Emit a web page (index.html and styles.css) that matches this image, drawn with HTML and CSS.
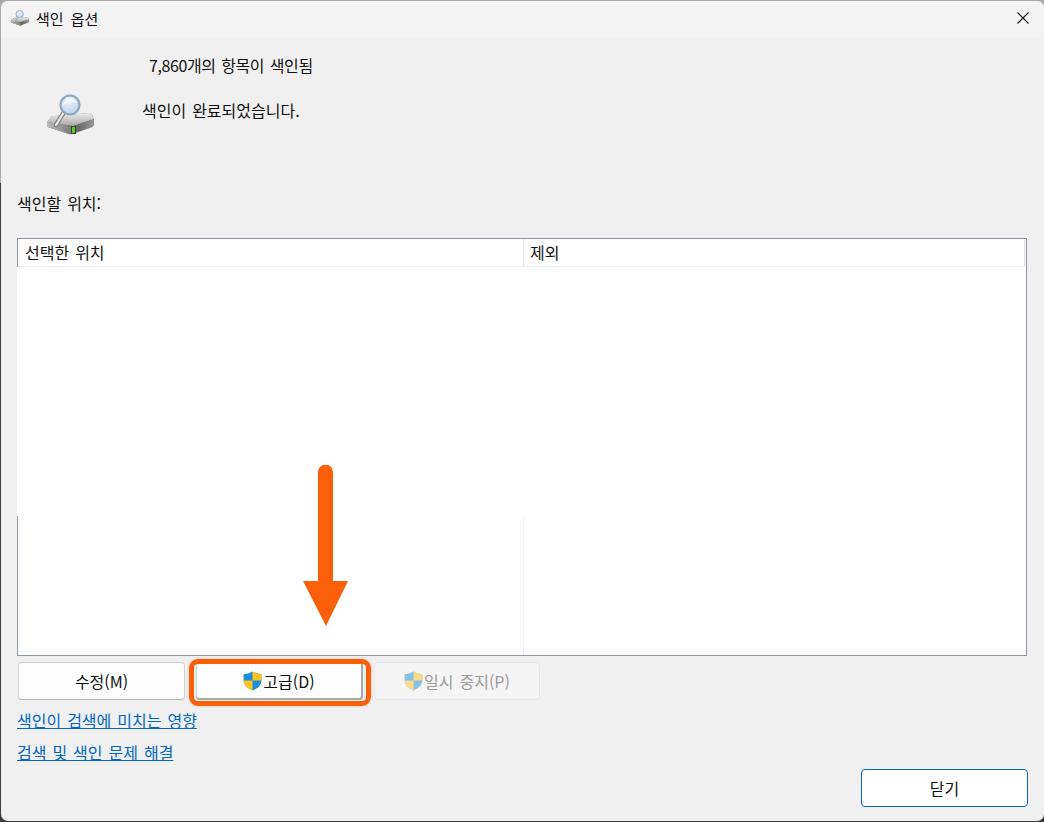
FILE: index.html
```html
<!DOCTYPE html>
<html lang="ko">
<head>
    <meta charset="UTF-8">
    <meta name="viewport" content="width=device-width, initial-scale=1.0">
    <title>색인 옵션</title>
    <link rel="stylesheet" href="styles.css">
</head>
<body>

    <div class="window">
        <div class="title-bar">
            <svg class="title-icon" width="20" height="20" viewBox="0 0 52 42">
                <use href="#drive-icon"/>
            </svg>
            <span class="title-text">색인 옵션</span>
            <svg class="close-icon" width="12" height="12" viewBox="0 0 12 12">
                <path d="M0.5 0.5L11.5 11.5M11.5 0.5L0.5 11.5" stroke="#1a1a1a" stroke-width="1.1" fill="none"/>
            </svg>
        </div>

        <div class="content">
            <div class="status">
                <svg class="status-icon" width="52" height="42" viewBox="0 0 52 42">
                    <defs>
                        <linearGradient id="drive-top" x1="0" y1="0" x2="0" y2="1">
                            <stop offset="0" stop-color="#ececec"/>
                            <stop offset="1" stop-color="#a8a8a8"/>
                        </linearGradient>
                        <linearGradient id="drive-left" x1="0" y1="0" x2="1" y2="0">
                            <stop offset="0" stop-color="#bdbdbd"/>
                            <stop offset="1" stop-color="#767676"/>
                        </linearGradient>
                        <linearGradient id="drive-right" x1="0" y1="0" x2="1" y2="0">
                            <stop offset="0" stop-color="#5c5c5c"/>
                            <stop offset="1" stop-color="#969696"/>
                        </linearGradient>
                        <radialGradient id="lens" cx="0.4" cy="0.3" r="0.8">
                            <stop offset="0" stop-color="#eaf3fc"/>
                            <stop offset="1" stop-color="#b5cfea"/>
                        </radialGradient>
                        <g id="drive-icon">
                            <path d="M2 28L6 23Q7 22 9 22L44 19Q46 19 47 21L49 25V30Q49 32 47 33L30 39Q27 40.500 24 40L4 33.500Q2 33 2 31Z" fill="#7a7a7a"/>
                            <path d="M2 28L6 23Q7 22 9 22L44 19Q46 19 47 21L49 25L28 32Z" fill="url(#drive-top)"/>
                            <path d="M2 28L28 32V40Q26 40.500 24 40L4 33.500Q2 33 2 31Z" fill="url(#drive-left)"/>
                            <path d="M28 32L49 25V30Q49 32 47 33L30 39Q29 39.500 28 40Z" fill="url(#drive-right)"/>
                            <rect x="26" y="32" width="5" height="8" fill="#3d3d3d"/>
                            <rect x="27" y="33" width="3" height="6" fill="#58d02a"/>
                            <path d="M11 31L19 18" stroke="#7e7e7e" stroke-width="4.500" stroke-linecap="round"/>
                            <path d="M11 31L19 18" stroke="#ececec" stroke-width="2.200" stroke-linecap="round"/>
                            <circle cx="25" cy="11" r="9.500" fill="url(#lens)" stroke="#8fa7c0" stroke-width="2.200"/>
                            <path d="M18 11Q19 5 26 4Q31 5 32 9Q24 7 18 11Z" fill="#f4f9fe"/>
                        </g>
                    </defs>
                    <use href="#drive-icon"/>
                </svg>
                <div class="status-text">
                    <p class="item-count">7,860개의 항목이 색인됨</p>
                    <p class="item-state">색인이 완료되었습니다.</p>
                </div>
            </div>

            <p class="list-label">색인할 위치:</p>

            <div class="locations">
                <div class="locations-head">
                    <div class="col-name">선택한 위치</div>
                    <div class="col-exclude">제외</div>
                </div>
                <div class="locations-blank"></div>
                <div class="locations-rest">
                    <div class="col-name"></div>
                    <div class="col-exclude"></div>
                </div>
            </div>

            <div class="button-row">
                <button class="btn">수정(M)</button>
                <button class="btn btn-focus">
                    <svg class="shield" width="19" height="20" viewBox="0 0 18 19">
                        <use href="#shield-icon"/>
                    </svg>고급(D)
                </button>
                <button class="btn btn-disabled">
                    <svg class="shield" width="19" height="20" viewBox="0 0 18 19">
                        <defs>
                            <g id="shield-icon">
                                <path d="M9 0.500Q13 3 17.500 3V9Q17.500 15 9 18.500Q0.500 15 0.500 9V3Q5 3 9 0.500Z" fill="#1a8fdc"/>
                                <path d="M9 0.500Q13 3 17.500 3V9H9Z" fill="#fcc419"/>
                                <path d="M0.500 9Q0.500 15 9 18.500V9Z" fill="#fcc419"/>
                            </g>
                        </defs>
                        <use href="#shield-icon" opacity="0.5"/>
                    </svg>일시 중지(P)
                </button>
            </div>

            <div class="links">
                <a class="link" href="#">색인이 검색에 미치는 영향</a>
                <a class="link" href="#">검색 및 색인 문제 해결</a>
            </div>

            <div class="footer">
                <button class="btn btn-default">닫기</button>
            </div>
        </div>

        <!-- 주석 표시 -->
        <div class="callout-box"></div>
        <svg class="callout-arrow" width="46" height="162" viewBox="0 0 46 162">
            <path d="M22.500 7V120" stroke="#fb5f0a" stroke-width="15" stroke-linecap="round" fill="none"/>
            <path d="M0 116H45L23 161Z" fill="#fb5f0a"/>
        </svg>
    </div>

</body>
</html>
```

FILE: styles.css
```css
* {
    box-sizing: border-box;
}

html, body {
    height: 100%;
}

body {
    margin: 0;
    background: linear-gradient(#a9a9a9 183px, #3c3c3c 183px);
    font-family: "Noto Sans CJK KR", "Liberation Sans", sans-serif;
    font-size: 16px;
    word-spacing: 1.5px;
    color: #111;
    overflow: hidden;
}

.window {
    position: relative;
    width: 1045px;
    height: 822px;
    background-color: #f0f0f0;
    background-clip: padding-box;
    border: 1px solid transparent;
    border-radius: 8px;
    overflow: hidden;
}

.title-bar {
    display: flex;
    align-items: center;
    height: 37px;
    padding: 0 15px 3px 9px;
    background-color: #f3f3f3;
    font-size: 15px;
    word-spacing: 3px;
}

.title-icon {
    margin-right: 6px;
}

.title-text {
    flex: 1;
}

.content {
    padding: 0 17px 0 16px;
}

.status {
    display: flex;
    height: 145px;
}

.status-icon {
    margin: 56px 0 0 28px;
}

.status-text p {
    margin: 0;
    line-height: 22px;
}

.item-count {
    padding: 16px 0 0 52px;
    letter-spacing: -0.4px;
}

.item-state {
    padding: 23px 0 0 45px;
}

.list-label {
    margin: 9px 0 0;
    line-height: 22px;
}

.locations {
    display: flex;
    flex-direction: column;
    height: 418px;
    margin-top: 24px;
    background-color: #fff;
    border: 1px solid #8d97a5;
}

.locations-head {
    display: flex;
    height: 28px;
    margin-right: 1px;
    line-height: 27px;
    border-bottom: 1px solid #e5f1fb;
    border-right: 1px solid #e2e2e2;
}

.locations-blank {
    height: 249px;
    margin-left: -1px;
    background-color: #fff;
}

.locations-rest {
    display: flex;
    flex: 1;
}

.col-name {
    width: 506px;
    padding-left: 7px;
    border-right: 1px solid #e5e5e5;
}

.col-exclude {
    flex: 1;
    padding-left: 6px;
}

.locations-rest .col-name {
    border-right-color: #eef3f9;
}

.button-row {
    display: flex;
    gap: 11px;
    margin: 6px 0 0 1px;
}

.btn {
    display: flex;
    align-items: center;
    justify-content: center;
    width: 167px;
    height: 38px;
    padding: 0;
    background-color: #fdfdfd;
    border: 1px solid #d0d0d0;
    border-bottom-color: #b5b5b5;
    border-radius: 4px;
    font-family: inherit;
    font-size: 16px;
    word-spacing: 1.5px;
    color: #111;
}

.btn-focus {
    border: 1px solid #d0d0d0;
    border-right: 2px solid #a8a8a8;
    border-bottom: 2px solid #a8a8a8;
}

.btn-disabled {
    width: 166px;
    background-color: #f5f5f5;
    border-color: #e6e6e6;
    color: #9b9b9b;
}

.shield {
    margin-right: 1px;
}

.links {
    display: flex;
    flex-direction: column;
    align-items: flex-start;
    gap: 10px;
    margin-top: 9px;
}

.link {
    line-height: 22px;
    color: #0067c0;
    text-decoration: underline;
}

.footer {
    display: flex;
    justify-content: flex-end;
    margin: 6px -1px 0 0;
}

.btn-default {
    background-color: #fff;
    border: 1px solid #0067c0;
}

.callout-box {
    position: absolute;
    left: 188px;
    top: 658px;
    width: 182px;
    height: 47px;
    border: 5px solid #fb5f0a;
    border-radius: 9px;
    box-shadow: 0 0 2px rgba(251, 95, 10, 0.5);
}

.callout-arrow {
    position: absolute;
    left: 302px;
    top: 464px;
}
```
